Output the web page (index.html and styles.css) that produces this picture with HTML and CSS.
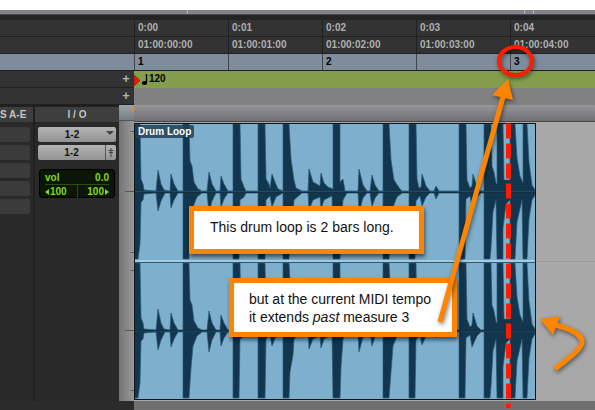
FILE: index.html
```html
<!DOCTYPE html>
<html lang="en">
<head>
<meta charset="utf-8">
<title>Drum Loop</title>
<link rel="stylesheet" href="styles.css">
</head>
<body>
<div class="toolbar"><i class="notch notch-a"></i><i class="notch notch-b"></i><i class="notch notch-c"></i></div>
<main class="editor">
  <section class="rulers">
    <div class="ruler time"><div class="head"></div><span class="cell">0:00</span><span class="cell">0:01</span><span class="cell">0:02</span><span class="cell">0:03</span><span class="cell">0:04</span></div>
    <div class="ruler time"><div class="head"></div><span class="cell">01:00:00:00</span><span class="cell">01:00:01:00</span><span class="cell">01:00:02:00</span><span class="cell">01:00:03:00</span><span class="cell">01:00:04:00</span></div>
    <div class="ruler bars"><div class="head"></div><span class="cell">1</span><span class="cell"></span><span class="cell">2</span><span class="cell"></span><span class="cell">3</span></div>
    <div class="ruler tempo"><div class="head"><button class="add" type="button">+</button></div>
      <div class="lane">
        <svg width="15" height="16" viewBox="0 0 15 16"><path d="M0 4L6 9.500L0 15Z" fill="#f01a10" stroke="#6d1a10" stroke-width=".6"/><ellipse cx="10.500" cy="12" rx="2.700" ry="2" fill="#000"/><path d="M12.500 12V3" stroke="#000" stroke-width="1.400"/></svg>
        <span>120</span>
      </div>
    </div>
    <div class="ruler markers"><div class="head"><button class="add" type="button">+</button></div><div class="lane"></div></div>
  </section>

  <section class="tracks">
    <aside class="strip">
      <div class="col sends">
        <h2>S A-E</h2>
        <div class="slots"><i class="slot"></i><i class="slot"></i><i class="slot"></i><i class="slot"></i><i class="slot"></i></div>
      </div>
      <div class="col io">
        <h2>I / O</h2>
        <div class="slots">
          <button class="route" type="button"><span>1-2</span><svg width="10" height="15" viewBox="0 0 10 15"><path d="M0 4H8L4 8Z" fill="#444"/></svg></button>
          <button class="route" type="button"><span>1-2</span><svg width="11" height="15" viewBox="0 0 11 15"><path d="M.5 0V15" stroke="#555"/><path d="M6 3V12M3.500 5.500H8.500M4 7.500H8" fill="none" stroke="#444"/></svg></button>
          <div class="meter">
            <div class="vol"><span>vol</span><span>0.0</span></div>
            <div class="pan"><span><svg width="4" height="6" viewBox="0 0 4 6"><path d="M4 0V6L0 3Z"/></svg>100</span><i class="split"></i><span>100<svg width="4" height="6" viewBox="0 0 4 6"><path d="M0 0V6L4 3Z"/></svg></span></div>
          </div>
        </div>
      </div>
    </aside>

    <div class="gutter">
      <div class="corner"></div>
      <svg class="ticks" width="15" height="278" viewBox="0 0 15 278"><path d="M12 10.500H15M6 70.500H15M12 131.500H15M12 149.500H15M6 209.500H15M12 269.500H15" stroke="#555"/></svg>
    </div>

    <div class="timeline">
      <div class="band"></div>
      <div class="track">
        <div class="clip">
          <svg class="wave" width="400" height="275" viewBox="1 0 400 275">
            <defs>
              <g id="channel">
                <path d="M0 0V-68H6L7 -13L9 -8L10 -2L22 -1L24 -22L27 -8L30 -2L36 -1L37 -18L40 -8L44 -1H49V-68H55L56 -31L58 -26L60 -10L64 -3L68 -1H73L75 -20L78 -8L82 -1H86L87 -16L90 -8L94 -1H99V-68H106L107 -13L110 -5L112 -1H124V-68H131L132 -13L135 -8L136 -4L138 -18L141 -10L144 -3L149 -1V-68H155L157 -33L160 -12L162 -4L168 -1H174L175 -23L179 -10L186 -6L187 -19L190 -9L194 -5L199 -3V-68H206V-10L209 -13L211 -1H224L225 -23L229 -7L233 -1H236L238 -17L241 -7L245 -1H249V-68H255L257 -32L260 -12L266 -3L268 -1H275V-68H282L283 -13L285 -4L287 -5L288 -18L292 -6L296 -1H300L302 -6L305 -1H325V-68H332L333 -12L336 -4L338 -6L339 -18L343 -5L347 -1H350V-68H357L358 -26L360 -20L362 -9L363 -8V-68H369L370 -12H376V-68H381L383 -34L386 -16L389 -9V-68H393L395 -30L398 -7L401 -2V0Z"/>
                <path d="M0 0V67H4L6 52L7 10L9 8L10 2L22 1L24 19L27 9L31 1H36L37 16L40 8L44 1H49V67H55L57 37L59 15L63 5L68 1H73L75 21L78 9L82 1H86L87 15L90 7L94 1H99V67H105L106 8L110 5L112 1H124V67H131L132 8L136 4L138 15L142 5L149 1V67H155L156 41L159 24L160 8L168 1H174L175 18L179 8L186 5L187 17L190 8L198 4L199 67H206L207 36L209 8L213 1H224L225 21L229 6L233 1H236L238 15L241 6L245 1H249V67H255L257 41L259 15L263 5L268 1H275V67H281L282 9L286 4L288 14L292 5L296 1H300L302 7L305 1H325V67H331L332 7L336 4L338 16L343 5L347 1H350V67H356L357 56L359 20L362 8L363 67H369V36L372 12L376 8V67H381L383 30L388 8L389 67H393L395 27L398 8L401 3V0Z"/>
              </g>
            </defs>
            <g fill="#12364e" stroke="#285a78" stroke-width=".7">
              <use href="#channel" y="68"/>
              <use href="#channel" y="207"/>
            </g>
            <path d="M0 68.500H401M0 206.500H401" stroke="#12303f"/>
            <path d="M0 137H401" stroke="#a7cce0" stroke-width="2"/>
            <path d="M0 138.500H401" stroke="#2b5a77"/>
          </svg>
          <span class="clip-name">Drum Loop</span>
        </div>
      </div>
    </div>
  </section>
  <footer class="footer"><div></div><div class="scroll"></div></footer>
</main>

<p class="callout first">This drum loop is 2 bars long.</p>
<p class="callout second">but at the current MIDI tempo<br>it extends <em>past</em> measure 3</p>
<svg class="annotations" width="595" height="410" viewBox="0 0 595 410">
  <path class="cut" d="M508.500 123.500V408"/>
  <ellipse class="ring" cx="515.500" cy="61" rx="16.500" ry="14"/>
  <g class="arrow">
    <path class="line" d="M440 322L503 97"/>
    <path class="tip" d="M508 79L492 95L513 100Z"/>
    <path class="line" d="M555 369C566 360 580 351 582 343C583 334 568 328 555 325"/>
    <path class="tip" d="M540 319L560 316L553 335Z"/>
  </g>
</svg>
</body>
</html>
```
FILE: styles.css
```css
* { box-sizing: border-box; }

body {
  margin: 0;
  min-height: 100vh;
  padding-top: 10px;
  display: flex;
  flex-direction: column;
  position: relative;
  overflow: hidden;
  background: #fff;
  font: bold 10px/16px "Liberation Sans", Arial, sans-serif;
}

h2, p { margin: 0; }

button {
  margin: 0;
  padding: 0;
  border: 0;
  font: inherit;
}

.toolbar {
  height: 5px;
  position: relative;
  background: #828486;
  border-bottom: 1px solid #474766;
}

.notch {
  position: absolute;
  top: 0;
  width: 1px;
  height: 4px;
  background: #b4b4b4;
}
.notch-a { left: 187px; }
.notch-b { left: 524px; }
.notch-c { left: 533px; }

.editor {
  flex: 1;
  display: flex;
  flex-direction: column;
  padding-top: 5px;
  background: #242424;
}

.ruler {
  display: grid;
  grid-template-columns: 134px repeat(4, 94px) minmax(85px, 1fr);
  height: 17px;
  border-bottom: 1px solid #202020;
  background: #333;
}

.head { padding-right: 4px; text-align: right; }

.cell {
  padding-left: 3px;
  border-left: 1px solid #202020;
  white-space: nowrap;
}

.time { color: #b0b0b0; }

.bars { background: #7f8c9b; color: #000; }
.bars .cell { border-left: 1px solid #41474e; }

.lane {
  grid-column: 2 / -1;
  display: flex;
}
.tempo .lane { background: #859e4d; color: #000; }
.markers .lane { background: #818181; }

.add {
  width: 8px;
  height: 16px;
  background: none;
  color: #b4b4b4;
  font-size: 13px;
  line-height: 16px;
}

.tracks {
  flex: 1;
  display: grid;
  grid-template-columns: 119px 15px 1fr;
}

.strip {
  display: grid;
  grid-template-columns: 33px 84px;
  column-gap: 2px;
  padding-top: 2px;
  background: #202020;
}

.col { background: #292929; }

.col h2 {
  height: 15px;
  background: #3e3e3e;
  color: #c4c4c4;
  font-size: 10px;
  line-height: 15px;
  text-align: center;
  white-space: nowrap;
}
.sends h2 { padding-right: 9px; }

.slots {
  display: grid;
  gap: 3px;
  padding: 5px 3px 0;
}
.sends .slots { padding-left: 0; }

.slot {
  height: 15px;
  border-radius: 0 2px 2px 0;
  background: #3b3b3b;
}

.route {
  display: flex;
  align-items: center;
  height: 15px;
  border-radius: 2px;
  background: linear-gradient(#b4b4b4, #929292);
  color: #111;
  line-height: 15px;
}
.route span { flex: 1; }

.meter {
  height: 29px;
  margin: 6px 1px 0;
  padding: 1px 5px;
  border: 1px solid #000;
  border-radius: 3px;
  background: #0b1608;
  color: #86d818;
  line-height: 13px;
}
.meter svg { fill: #86d818; }

.vol, .pan {
  display: flex;
  justify-content: space-between;
}
.vol { border-bottom: 1px solid #2d4c12; }
.pan span {
  display: flex;
  align-items: center;
  gap: 1px;
}
.split { width: 1px; background: #2d4c12; }

.gutter { background: linear-gradient(90deg, #747474, #999); }

.corner {
  height: 16px;
  border-bottom: 1px solid #555;
  background:
    linear-gradient(#f08a1c, #f08a1c) 100% 2px / 2px 4px no-repeat,
    linear-gradient(#9ca2aa, #777c84);
}

.ticks { display: block; }

.timeline { background: #a8a8a8; }

.band {
  height: 17px;
  border-bottom: 1px solid #444;
  background: linear-gradient(#969698, #707072);
}

.track {
  padding-top: 1px;
  background: linear-gradient(#999, #999) 0 139px / 100% 1px no-repeat;
}

.clip {
  position: relative;
  width: 402px;
  border: 1px solid #101418;
  background: #7eb0ce;
}

.wave { display: block; }

.clip-name {
  position: absolute;
  top: 1px;
  left: 0;
  padding: 0 3px;
  border-radius: 2px;
  background: rgba(35, 65, 85, .85);
  color: #fff;
  line-height: 13px;
}

.footer {
  display: grid;
  grid-template-columns: 134px 1fr;
  height: 9px;
  background: #2b2b2b;
}
.scroll { background: #707070; }

.callout {
  position: absolute;
  border: 5px solid #ff8500;
  background: #fff;
  color: #111;
  font-size: 14px;
  font-weight: normal;
  line-height: 18px;
  white-space: nowrap;
  box-shadow: 1px 3px 4px rgba(0, 0, 0, .55);
}

.first {
  top: 206px;
  left: 189px;
  width: 235px;
  padding: 7px 16px 13px;
}

.second {
  top: 278px;
  left: 229px;
  width: 228px;
  padding: 7px 15px 6px;
}

.annotations {
  position: absolute;
  top: 0;
  left: 0;
  pointer-events: none;
  fill: none;
}

.cut { stroke: #ff1c00; stroke-width: 5px; stroke-dasharray: 15 5; }

.ring {
  stroke: #ff1c00;
  stroke-width: 4px;
  filter: drop-shadow(1px 2px 2px rgba(0, 0, 0, .5));
}

.arrow { filter: drop-shadow(1px 2px 2px rgba(0, 0, 0, .5)); }
.line { stroke: #ff8500; stroke-width: 5px; }
.tip { fill: #ff8500; }
```
